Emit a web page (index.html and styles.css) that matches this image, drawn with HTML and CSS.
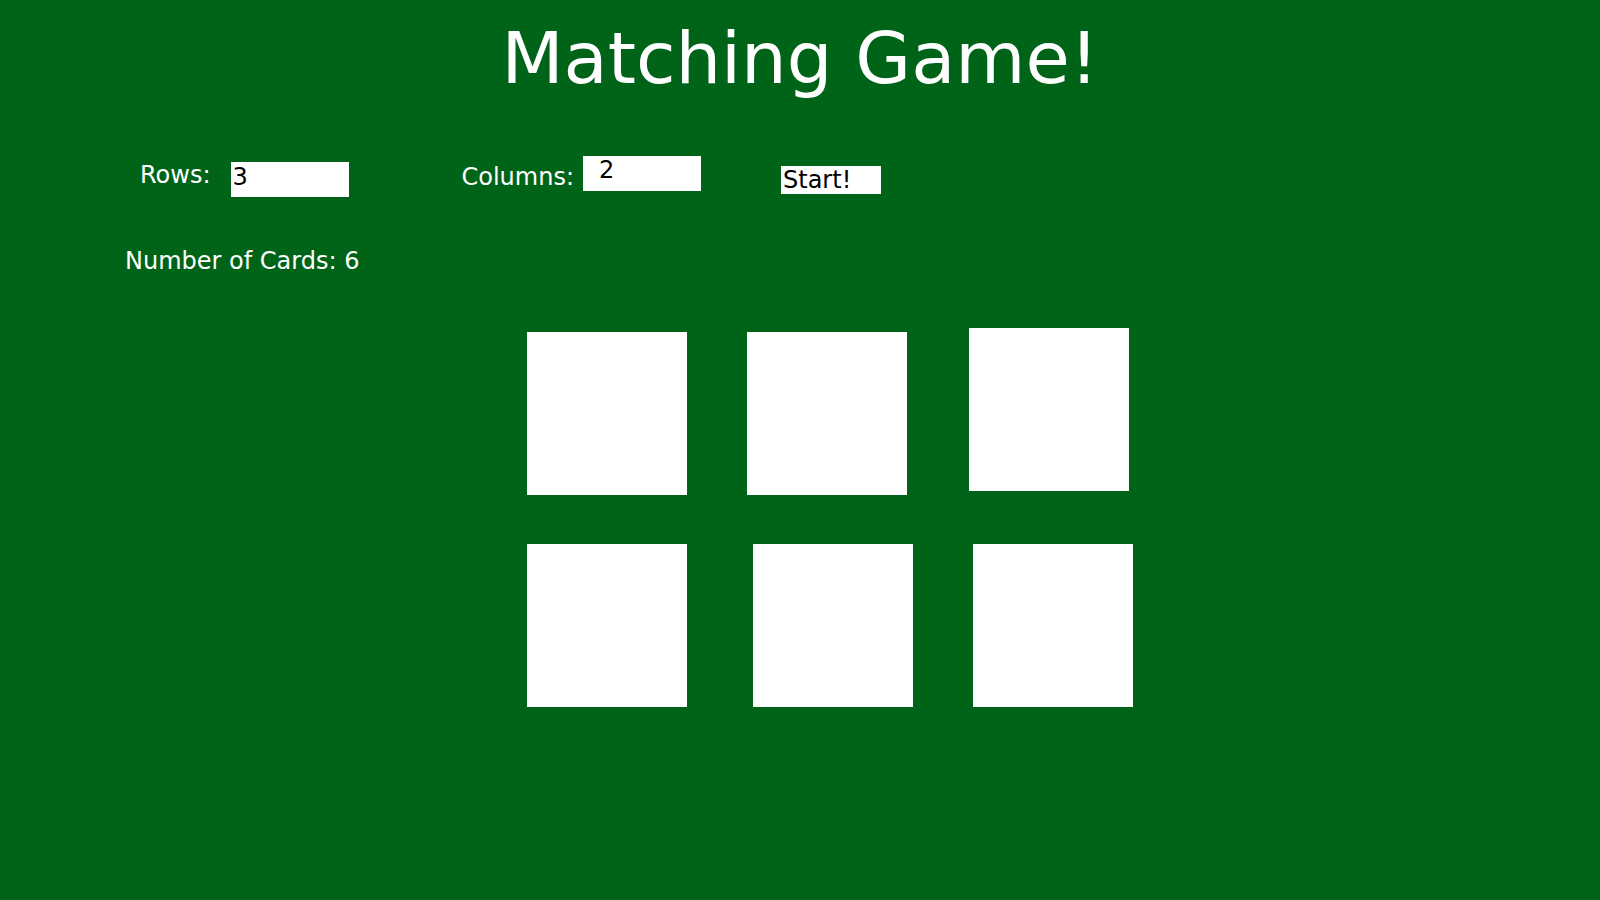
FILE: index.html
```html
<!DOCTYPE html>
<html>
<head>
<meta charset="utf-8">
<title>Matching Game</title>
<link rel="stylesheet" href="styles.css">
</head>
<body>
  <h1 class="title">Matching Game!</h1>
  <div class="controls">
    <span class="label label-rows">Rows:</span>
    <input class="field field-rows" type="text" value="3">
    <span class="label label-cols">Columns:</span>
    <input class="field field-cols" type="text" value="2">
    <button class="start">Start!</button>
  </div>
  <p class="count">Number of Cards: 6</p>
  <div class="board">
    <div class="row row-1">
      <div class="card"></div>
      <div class="card"></div>
      <div class="card card-raised"></div>
    </div>
    <div class="row row-2">
      <div class="card"></div>
      <div class="card card-wide"></div>
      <div class="card"></div>
    </div>
  </div>
</body>
</html>
```

FILE: styles.css
```css
html, body {
  margin: 0;
  padding: 0;
}
body {
  background: #006418;
  color: #ffffff;
  font-family: "DejaVu Sans", sans-serif;
  min-height: 900px;
}
.title {
  margin: 16px 0 0;
  font-size: 72px;
  font-weight: normal;
  line-height: 84px;
  text-align: center;
}
.controls {
  display: flex;
  align-items: flex-start;
  margin-top: 56px;
  padding-left: 140px;
}
.label {
  font-size: 24px;
  line-height: 28px;
}
.label-rows { margin-top: 5px; }
.label-cols { margin-top: 7px; margin-left: 113px; }
.field {
  box-sizing: border-box;
  width: 118px;
  height: 35px;
  border: none;
  outline: none;
  background: #ffffff;
  color: #000000;
  font-family: "DejaVu Sans", sans-serif;
  font-size: 24px;
  line-height: 28px;
}
.field-rows {
  margin-top: 6px;
  margin-left: 20px;
  padding: 0 0 6px 2px;
}
.field-cols {
  margin-top: 0;
  margin-left: 9px;
  padding: 0 0 7px 16px;
}
.start {
  box-sizing: border-box;
  margin-top: 10px;
  margin-left: 80px;
  width: 100px;
  height: 28px;
  padding: 0 0 0 2px;
  border: none;
  background: #ffffff;
  color: #000000;
  font-family: "DejaVu Sans", sans-serif;
  font-size: 24px;
  line-height: 28px;
  text-align: left;
}
.count {
  margin: 50px 0 0;
  padding-left: 125px;
  font-size: 24px;
  line-height: 28px;
}
.board {
  display: flex;
  flex-direction: column;
  gap: 49px;
  margin-top: 53px;
  padding-left: 527px;
}
.row {
  display: flex;
  align-items: flex-start;
  gap: 60px;
}
.card {
  width: 160px;
  height: 163px;
  background: #ffffff;
}
.row-1 .card { margin-top: 4px; }
.row-1 .card-raised { margin-top: 0; margin-left: 2px; }
.card-wide { margin-left: 6px; }
```
